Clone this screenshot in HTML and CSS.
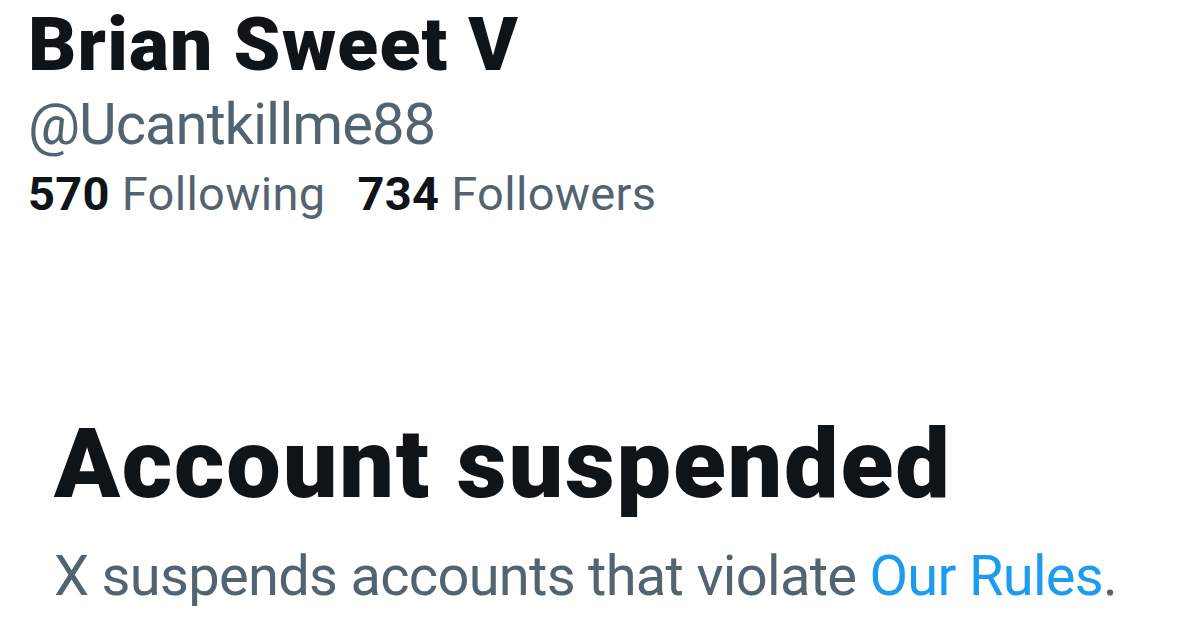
FILE: index.html
```html
<!DOCTYPE html>
<html lang="en">
<head>
    <meta charset="UTF-8">
    <title>Account suspended</title>
    <link rel="stylesheet" href="styles.css">
</head>
<body>
    <div class="profile">
        <h1 class="name">Brian Sweet V</h1>
        <div class="handle">@Ucantkillme88</div>
        <div class="stats">
            <span class="stat"><b>570</b> Following</span>
            <span class="stat"><b>734</b> Followers</span>
        </div>
    </div>

    <!-- Suspended notice -->
    <div class="notice">
        <h2>Account suspended</h2>
        <p>X suspends accounts that violate <a href="#">Our Rules</a>.</p>
    </div>
</body>
</html>
```

FILE: styles.css
```css
body {
    margin: 0;
    background-color: #fff;
    font-family: Roboto, "Liberation Sans", sans-serif;
    color: #0f1419;
}

.profile {
    padding: 4px 0 0 28px;
}

.name {
    font-size: 75px;
    font-weight: 900;
    line-height: 80px;
    margin: 0;
    letter-spacing: 1.2px;
}

.handle {
    font-size: 58px;
    line-height: 64px;
    color: #536471;
    margin-top: 8px;
    letter-spacing: -1px;
}

.stats {
    display: flex;
    gap: 32px;
    font-size: 47px;
    line-height: 56px;
    color: #536471;
    margin-top: 10px;
    letter-spacing: 0.3px;
}

.stats b {
    color: #0f1419;
}

.notice {
    padding: 190px 0 0 54px;
}

.notice h2 {
    font-size: 97px;
    font-weight: 900;
    line-height: 104px;
    margin: 0;
    letter-spacing: 1.8px;
}

.notice p {
    font-size: 56px;
    line-height: 64px;
    color: #536471;
    margin: 28px 0 0;
    letter-spacing: -0.7px;
}

a {
    color: #1d9bf0;
    text-decoration: none;
}
```
